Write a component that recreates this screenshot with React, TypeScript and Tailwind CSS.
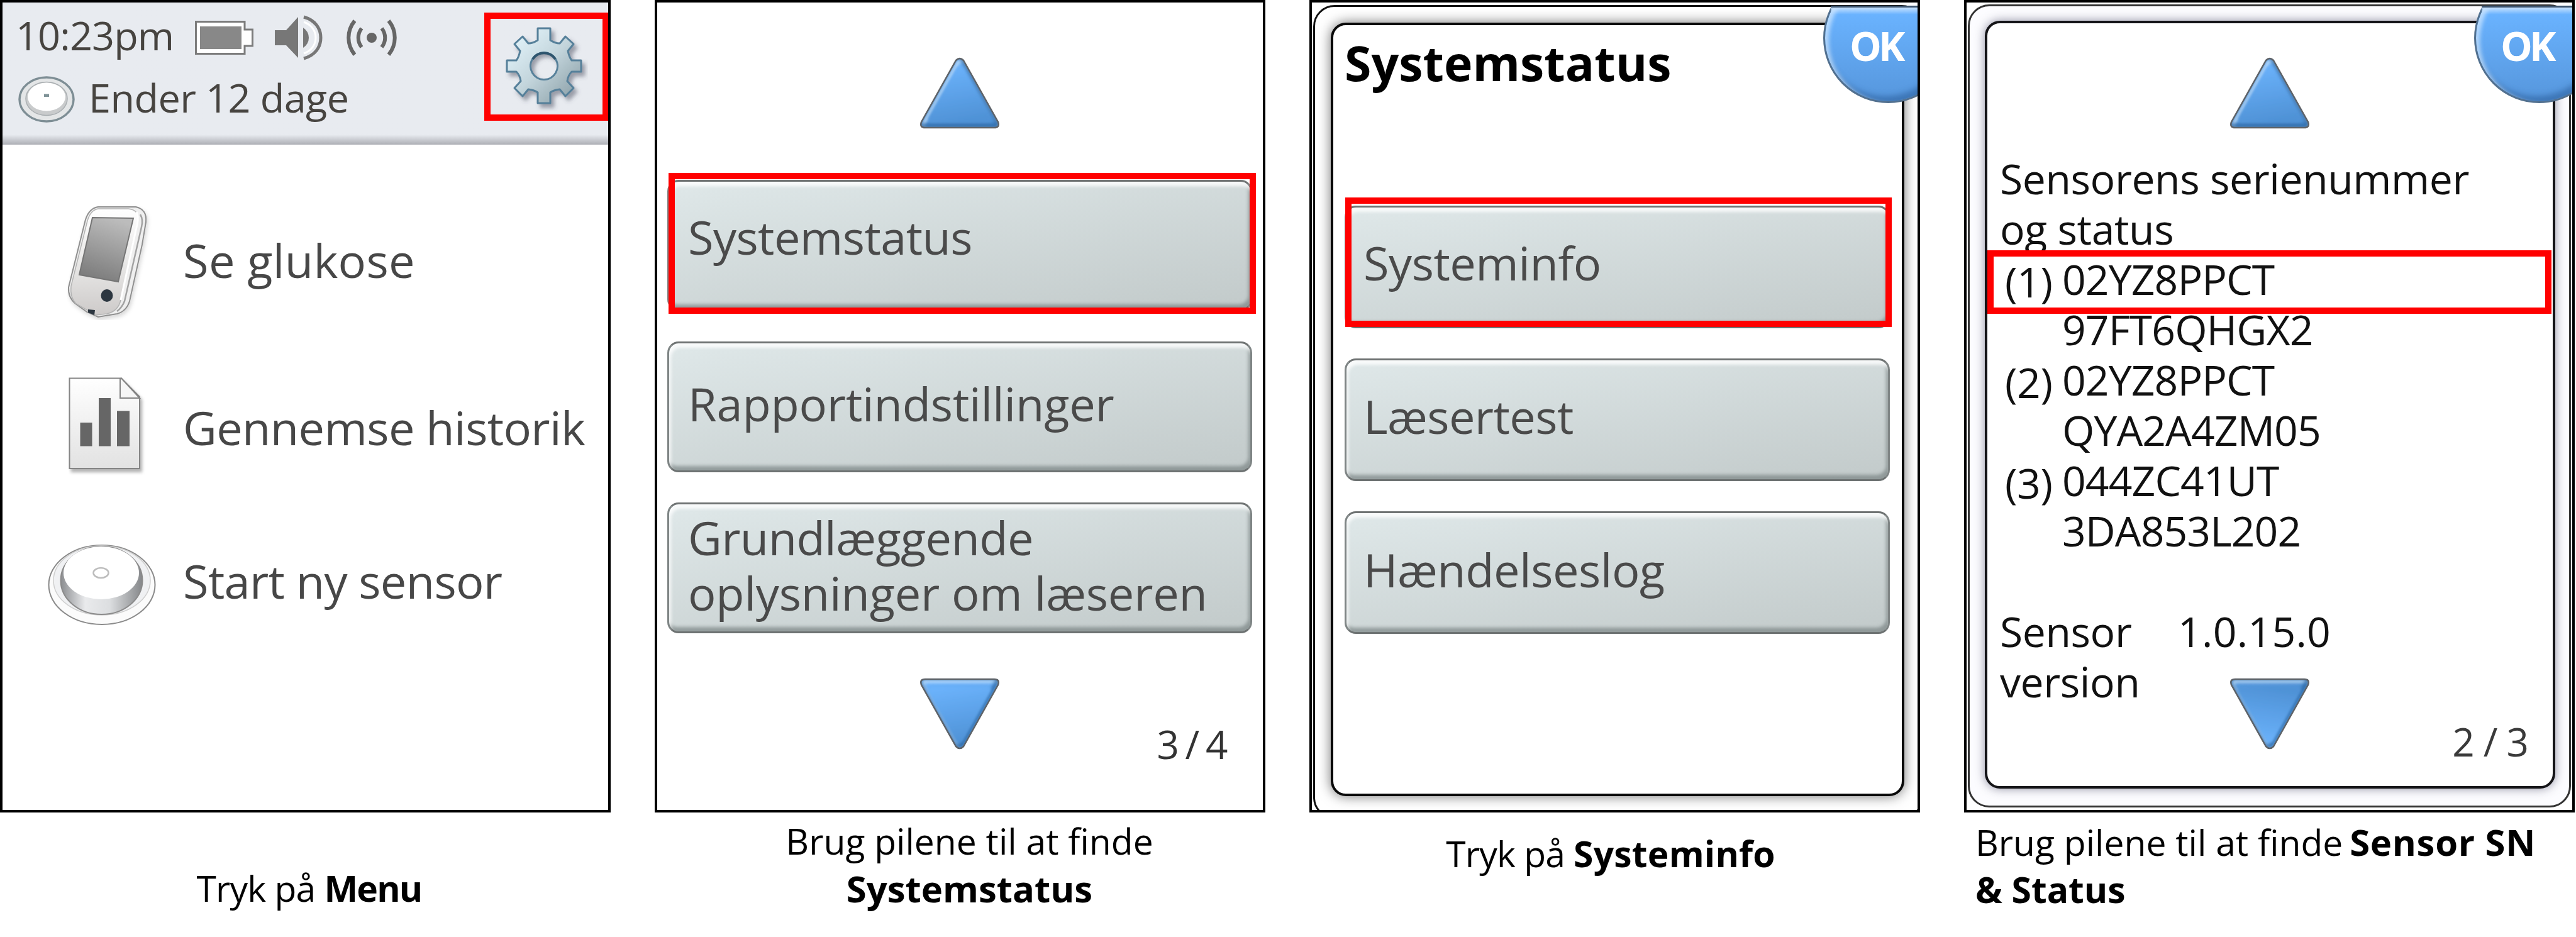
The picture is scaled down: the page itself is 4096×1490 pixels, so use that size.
import React from "react";

type BoxProps = { className?: string; children?: React.ReactNode };

/* ---------- status bar icons ---------- */

function BatteryIcon() {
  return (
    <svg className="h-[54px] w-[93px]" viewBox="0 0 93 54">
      <path d="M1.500 1.500H79V14H91.500V40H79V52.500H1.500Z" fill="#fff" stroke="#7c7c7c" strokeWidth="3" />
      <rect x="8" y="9" width="66" height="36" fill="#888" />
    </svg>
  );
}

function SpeakerIcon() {
  return (
    <svg className="h-[72px] w-[76px]" viewBox="0 0 76 72">
      <path d="M0 24H18L37 3V68L18 48H0Z" fill="#777" />
      <path d="M45 20Q54 26 54 36T45 52Z" fill="#777" />
      <path d="M46 3C64 8 73 21 73 36S64 64 46 69" fill="none" stroke="#777" strokeWidth="5" />
      <path d="M46 11C58 15 65 25 65 36S58 57 46 61" fill="none" stroke="#fff" strokeWidth="3" />
    </svg>
  );
}

function SignalIcon() {
  return (
    <svg className="h-[58px] w-[82px]" viewBox="0 0 82 58" fill="none" stroke="#666" strokeWidth="6">
      <path d="M14 2C1 18 1 40 14 56M68 2C81 18 81 40 68 56" />
      <path d="M25 14C18 23 18 35 25 44M57 14C64 23 64 35 57 44" />
      <circle cx="41" cy="29" r="8" fill="#666" stroke="none" />
    </svg>
  );
}

function SmallSensorIcon() {
  return (
    <svg className="h-[74px] w-[90px]" viewBox="0 0 90 74">
      <ellipse cx="45" cy="37" rx="43" ry="35" fill="#e4e6e7" stroke="#7e8e95" strokeWidth="3.500" />
      <ellipse cx="45" cy="36" rx="33" ry="26.500" fill="#c9cbcc" stroke="#a9aeb1" strokeWidth="1.500" />
      <ellipse cx="45" cy="33" rx="30" ry="22.500" fill="#fff" />
      <rect x="41" y="28.500" width="8" height="4.500" fill="#7f9297" />
    </svg>
  );
}

function GearIcon() {
  return (
    <svg className="h-[136px] w-[132px]" viewBox="-62 -64 132 136">
      <defs>
        <linearGradient id="gear" x1="0" y1="0" x2="1" y2="1">
          <stop offset="0.1" stopColor="#e2f3fa" />
          <stop offset="0.5" stopColor="#c3d5dc" />
          <stop offset="0.9" stopColor="#8fa3ab" />
        </linearGradient>
        <filter id="gearShadow" x="-20%" y="-20%" width="150%" height="150%">
          <feDropShadow dx="5" dy="6" stdDeviation="3" floodColor="#4a4f60" floodOpacity="0.5" />
        </filter>
      </defs>
      <path
        filter="url(#gearShadow)"
        fill="url(#gear)"
        stroke="#56809a"
        strokeWidth="3"
        strokeLinejoin="round"
        fillRule="evenodd"
        d="M-10 -60H10V-41Q18 -36 25 -36L34 -47L47 -35L38 -24Q40 -14 44 -9H59V9H44Q38 15 37 24L47 35L34 48L25 37Q16 38 10 42V59H-10V42Q-16 38 -25 37L-34 48L-47 35L-37 24Q-38 15 -44 9H-59V-9H-44Q-40 -14 -38 -24L-47 -35L-34 -47L-25 -36Q-18 -36 -10 -41ZM0 -21.500A21.500 21.500 0 1 0 0.01 -21.500Z"
      />
      <path d="M-18 -11A21.500 21.500 0 0 1 18 -11" fill="none" stroke="#2f556e" strokeWidth="4" />
    </svg>
  );
}

/* ---------- main menu icons ---------- */

function ReaderIcon() {
  return (
    <svg className="h-[184px] w-[140px]" viewBox="0 0 140 184">
      <defs>
        <linearGradient id="readerScreen" x1="0.6" y1="0" x2="0.3" y2="1">
          <stop offset="0" stopColor="#bcbcbc" />
          <stop offset="1" stopColor="#7a7a7a" />
        </linearGradient>
        <linearGradient id="readerBody" x1="0.5" y1="0" x2="0.5" y2="1">
          <stop offset="0" stopColor="#fff" />
          <stop offset="0.6" stopColor="#e4e3e2" />
          <stop offset="1" stopColor="#cdcac9" />
        </linearGradient>
        <filter id="readerShadow" x="-20%" y="-20%" width="150%" height="150%">
          <feDropShadow dx="2" dy="4" stdDeviation="3" floodOpacity="0.15" />
        </filter>
      </defs>
      <path
        filter="url(#readerShadow)"
        d="M50 4H110Q128 8 126 28L120 64L100 154Q95 170 80 174L50 179L32 171L14 158Q2 148 3 132L30 24Q36 6 50 4Z"
        fill="#efefef"
        stroke="#909090"
        strokeWidth="2"
      />
      <path d="M50 7H98Q116 9 113 26L86 152Q82 170 64 174L46 176L15 158Q5 148 7 130L33 26Q38 9 50 7Z" fill="url(#readerBody)" stroke="#b4b4b4" strokeWidth="1.500" />
      <path d="M117 16Q122 24 119 36L92 154Q88 164 80 170" fill="none" stroke="#a2a2a2" strokeWidth="2.500" />
      <path d="M111 12Q115 20 112 32L86 152" fill="none" stroke="#fff" strokeWidth="3" />
      <path d="M41 21L106 22L82 123L20 112Z" fill="url(#readerScreen)" stroke="#757575" strokeWidth="2" />
      <ellipse cx="64" cy="145" rx="9.500" ry="10" fill="#2c3640" />
      <path d="M34 167L45 168L44 176L34 172Z" fill="#2c3640" />
    </svg>
  );
}

function ReportIcon() {
  return (
    <svg className="h-[160px] w-[130px]" viewBox="0 0 130 160">
      <defs>
        <linearGradient id="page" x1="0" y1="0" x2="0" y2="1">
          <stop offset="0" stopColor="#fff" />
          <stop offset="1" stopColor="#e2e2e2" />
        </linearGradient>
        <filter id="pageShadow" x="-20%" y="-20%" width="150%" height="150%">
          <feDropShadow dx="3" dy="5" stdDeviation="2.5" floodOpacity="0.3" />
        </filter>
      </defs>
      <path filter="url(#pageShadow)" d="M1.500 1.500H84L113 31V145H1.500Z" fill="url(#page)" stroke="#858585" strokeWidth="2" />
      <path d="M82 2V33H113L84 1.500Z" fill="#f6f6f6" stroke="#858585" strokeWidth="2" />
      <path d="M18.500 72H37.500V109.500H18.500ZM48 33H67V109.500H48ZM77 53.500H97V109.500H77Z" fill="#666" />
    </svg>
  );
}

function SensorIcon() {
  return (
    <svg className="h-[134px] w-[172px]" viewBox="0 0 172 134">
      <defs>
        <linearGradient id="puck" x1="0" y1="0" x2="1" y2="0">
          <stop offset="0" stopColor="#8b8d90" />
          <stop offset="0.3" stopColor="#e9eaec" />
          <stop offset="0.6" stopColor="#dcdee0" />
          <stop offset="1" stopColor="#85878a" />
        </linearGradient>
      </defs>
      <ellipse cx="86" cy="65" rx="84.500" ry="63" fill="#fbfbfb" stroke="#8a8a8a" strokeWidth="2" />
      <ellipse cx="86" cy="58" rx="77" ry="55" fill="#f0f1f3" stroke="#cfcfcf" strokeWidth="1.500" />
      <ellipse cx="85.500" cy="58" rx="65" ry="54" fill="url(#puck)" stroke="#8b8b8b" strokeWidth="2" />
      <ellipse cx="85" cy="46" rx="60" ry="42" fill="#fff" />
      <ellipse cx="84.500" cy="46" rx="12" ry="8" fill="#fff" stroke="#bdbdbd" strokeWidth="2.500" />
    </svg>
  );
}

/* ---------- shared pieces ---------- */

function Arrow({ id, d, flip }: { id: string; d: string; flip?: boolean }) {
  return (
    <svg className="h-[114px] w-[128px]" viewBox="0 0 128 114">
      <defs>
        <linearGradient id={id} x1="0.3" y1={flip ? "1" : "0"} x2="0.5" y2={flip ? "0" : "1"}>
          <stop offset="0" stopColor="#6bb2fb" />
          <stop offset="1" stopColor="#4f92d6" />
        </linearGradient>
        <clipPath id={id + "Clip"}>
          <path d={d} />
        </clipPath>
        <filter id={id + "Soft"} x="-20%" y="-20%" width="140%" height="140%">
          <feGaussianBlur stdDeviation="2.5" />
        </filter>
      </defs>
      <path d={d} fill={`url(#${id})`} />
      <g clipPath={`url(#${id}Clip)`}>
        <path d={d} fill="none" stroke="#d4e8fc" strokeWidth="6" opacity="0.75" transform="translate(3 3)" filter={`url(#${id}Soft)`} />
        <path d={d} fill="none" stroke="#28619c" strokeWidth="7" opacity="0.7" transform="translate(-2.500 -3)" filter={`url(#${id}Soft)`} />
        <path d={d} fill={`url(#${id})`} transform="translate(12.800 13) scale(0.8)" filter={`url(#${id}Soft)`} />
      </g>
      <path d={d} fill="none" stroke="#5d6268" strokeWidth="2.500" />
    </svg>
  );
}

const UP = "M58 5Q64 -1 70 5L125 103Q128 112 119 112H9Q0 112 3 103Z";
const DOWN = "M9 2H119Q128 2 125 11L70 109Q64 115 58 109L3 11Q0 2 9 2Z";

function Screen({ className = "", children }: BoxProps) {
  return <div className={"relative flex h-[1292px] w-[971px] flex-col overflow-hidden border-4 border-black bg-white " + className}>{children}</div>;
}

function MenuButton({ className = "", children }: BoxProps) {
  return (
    <div
      className={
        "flex items-center rounded-[18px] border-[3px] border-x-[#7f8585] border-t-[#6f7373] border-b-[#6d7272] bg-linear-170 from-[#dfe8e9] to-[#c2caca] text-[74px] leading-[88px] text-[#4a4a4a] shadow-[inset_3px_7px_5px_rgba(255,255,255,0.8),inset_-3px_-7px_5px_rgba(110,120,120,0.6)] " +
        className
      }
    >
      {children}
    </div>
  );
}

function OkBadge({ className = "", children }: BoxProps) {
  return (
    <div className={"absolute top-[5px] right-0 h-[160px] w-[156px] overflow-hidden " + className}>
      <div className="absolute -top-[52px] left-0 h-[207px] w-[207px] rounded-full border-[3px] border-[#52708f] bg-linear-to-b from-[#6ab3ff] from-30% to-[#5696dc] shadow-[inset_6px_4px_6px_rgba(215,235,255,0.7),inset_-5px_-8px_8px_rgba(35,85,145,0.5)]" />
      <div className="absolute top-0 right-0 left-[12px] h-[14px] border-t-[3px] border-[#3c5570] bg-linear-to-b from-[#c8e2fd] to-[#c8e2fd]/0" />
      <div className="absolute top-[20px] left-[42px] text-[64px] leading-[88px] font-bold tracking-[-5px] text-white">{children}</div>
    </div>
  );
}

/* ---------- the four screens ---------- */

function MainMenu() {
  return (
    <Screen>
      <div className="flex h-[226px] w-full shrink-0 flex-col bg-[#e8ebf0] bg-linear-to-b from-[#e8ebf0] from-93% via-[#c6c8ce] via-97% to-[#adafb5] pl-[21px] text-[63px] text-[#474440]">
        <div className="flex h-[106px] items-center pt-[5px] leading-[80px]">
          <span className="-mt-[8px] w-[285px] tracking-[-0.900px]">10:23pm</span>
          <BatteryIcon />
          <span className="ml-[34px]"><SpeakerIcon /></span>
          <span className="ml-[37px]"><SignalIcon /></span>
        </div>
        <div className="flex h-[96px] items-center leading-[80px]">
          <span className="ml-1"><SmallSensorIcon /></span>
          <span className="-mt-[6px] ml-[22px] tracking-[-0.600px]">Ender 12 dage</span>
        </div>
      </div>
      <div className="absolute top-[16px] left-[766px] flex h-[172px] w-[198px] items-center justify-center border-[10px] border-[#ff0000]">
        <span className="mt-[6px]"><GearIcon /></span>
      </div>
      <div className="flex flex-col pt-[95px] text-[74px] leading-[100px] text-[#474747]">
        <div className="flex h-[184px] items-center pl-[102px]">
          <ReaderIcon />
          <span className="-mt-[7px] ml-[45px] tracking-[0.300px]">Se glukose</span>
        </div>
        <div className="mt-[91px] flex h-[160px] items-center pl-[105px]">
          <ReportIcon />
          <span className="ml-[52px] whitespace-nowrap tracking-[-0.650px]">Gennemse historik</span>
        </div>
        <div className="mt-[105px] flex h-[134px] items-center pl-[72px]">
          <SensorIcon />
          <span className="-mt-[17px] ml-[43px] tracking-[-0.700px]">Start ny sensor</span>
        </div>
      </div>
    </Screen>
  );
}

function StatusList() {
  return (
    <Screen>
      <div className="mt-[87px] ml-[417px]"><Arrow id="up2" d={UP} /></div>
      <div className="mt-[81px] ml-[16px] flex w-[930px] flex-col gap-[48.500px]">
        <MenuButton className="h-[208px] pb-[26px] pl-[30px] tracking-[-0.600px]">Systemstatus</MenuButton>
        <MenuButton className="h-[208px] pb-[9px] pl-[30px] tracking-[-0.200px]">Rapportindstillinger</MenuButton>
        <MenuButton className="h-[208px] pb-[9px] pl-[30px]">
          <span className="whitespace-nowrap">
            <span className="tracking-[-0.600px]">Grundlæggende</span>
            <br />
            <span className="tracking-[-0.200px]">oplysninger om læseren</span>
          </span>
        </MenuButton>
      </div>
      <div className="mt-[71px] ml-[417px]"><Arrow id="down2" d={DOWN} /></div>
      <div className="absolute top-[1137px] right-[46px] text-[62px] leading-[84px] tracking-[9.600px] text-[#333]">3/4</div>
      <div className="absolute top-[271px] left-[18px] h-[224px] w-[934px] border-[10px] border-[#ff0000]" />
    </Screen>
  );
}

function SystemStatus() {
  return (
    <Screen>
      <div className="absolute top-[4px] left-[2px] h-[1294px] w-[970px] rounded-[34px] border-[3px] border-[#111] bg-white" />
      <div className="absolute top-[32px] left-[30px] flex h-[1230px] w-[912px] flex-col rounded-[24px] border-4 border-[#0a0a0a] bg-white pl-[18px] shadow-[0_0_20px_rgba(0,0,0,0.55)]">
        <div className="mt-[10px] text-[77px] leading-[100px] font-bold text-black">Systemstatus</div>
        <div className="mt-[177px] flex w-[867px] flex-col gap-[48px]">
          <MenuButton className="h-[195px] pb-[14px] pl-[27px] tracking-[-0.500px]">Systeminfo</MenuButton>
          <MenuButton className="h-[195px] pb-[12px] pl-[27px] tracking-[-0.600px]">Læsertest</MenuButton>
          <MenuButton className="h-[195px] pb-[10px] pl-[27px] tracking-[-0.500px]">Hændelseslog</MenuButton>
        </div>
      </div>
      <OkBadge className="left-[813px]">OK</OkBadge>
      <div className="absolute top-[310px] left-[53px] h-[206px] w-[869px] border-[10px] border-[#ff0000]" />
    </Screen>
  );
}

const SERIALS = [
  ["(1)", "02YZ8PPCT"],
  ["", "97FT6QHGX2"],
  ["(2)", "02YZ8PPCT"],
  ["", "QYA2A4ZM05"],
  ["(3)", "044ZC41UT"],
  ["", "3DA853L202"],
];

function SensorSerials() {
  return (
    <Screen>
      <div className="absolute top-[3px] left-[2px] h-[1277px] w-[959px] rounded-[34px] border-[3px] border-[#333] bg-[#fcfcff]" />
      <div className="absolute top-[29px] left-[29px] flex h-[1221px] w-[907px] flex-col rounded-[24px] border-4 border-[#151518] bg-white pl-[20px] text-[66px] leading-[80px] tracking-[-0.400px] text-[#111] shadow-[0_0_16px_rgba(40,40,70,0.5)]">
        <div className="mt-[54px] ml-[365px]"><Arrow id="up4" d={UP} /></div>
        <div className="mt-[38px] whitespace-nowrap">
          Sensorens serienummer
          <br />
          og status
        </div>
        {SERIALS.map(([n, code]) => (
          <div key={n + code} className="flex h-[80px]">
            <span className="mt-[4px] w-[99px] pl-[8px]">{n}</span>
            <span className="tracking-[-0.900px]">{code}</span>
          </div>
        ))}
        <div className="mt-[80px] flex">
          <div className="w-[283px]">
            Sensor
            <br />
            version
          </div>
          <div className="tracking-[0.300px]">1.0.15.0</div>
        </div>
      </div>
      <div className="absolute top-[1074px] left-[418px]"><Arrow id="down4" d={DOWN} flip /></div>
      <div className="absolute top-[1133px] right-[70px] text-[62px] leading-[84px] tracking-[-1px] text-[#3a3a3a]">2 / 3</div>
      <OkBadge className="left-[807px]">OK</OkBadge>
      <div className="absolute top-[394px] left-[33px] h-[101px] w-[897px] border-[10px] border-[#ff0000]" />
    </Screen>
  );
}

export default function App() {
  return (
    <div className="flex h-[1490px] w-[4096px] gap-[70px] overflow-hidden bg-white font-['Open_Sans',sans-serif]">
      <div className="flex w-[971px] shrink-0 flex-col">
        <MainMenu />
        <p className="mt-[83px] pl-[12px] text-center text-[57px] leading-[75px] tracking-[-0.800px] text-black">
          Tryk på <b className="tracking-[-1.800px]">Menu</b>
        </p>
      </div>
      <div className="flex w-[971px] shrink-0 flex-col">
        <StatusList />
        <p className="mt-[8px] pl-[30px] text-center text-[57px] leading-[75px] text-black">
          Brug pilene til at finde
          <br />
          <b className="text-[58px]">Systemstatus</b>
        </p>
      </div>
      <div className="flex w-[971px] shrink-0 flex-col">
        <SystemStatus />
        <p className="mt-[28px] pr-[13px] text-center text-[57px] leading-[75px] text-black">
          <span className="tracking-[-0.800px]">Tryk på </span>
          <b className="tracking-[0.200px]">Systeminfo</b>
        </p>
      </div>
      <div className="flex w-[971px] shrink-0 flex-col">
        <SensorSerials />
        <p className="mt-[9px] pl-[18px] text-[57px] leading-[75px] whitespace-nowrap text-black">
          Brug pilene til at finde <b className="-ml-[4px] text-[58px] tracking-[0.700px]">Sensor SN</b>
          <br />
          <b>&amp; Status</b>
        </p>
      </div>
    </div>
  );
}
